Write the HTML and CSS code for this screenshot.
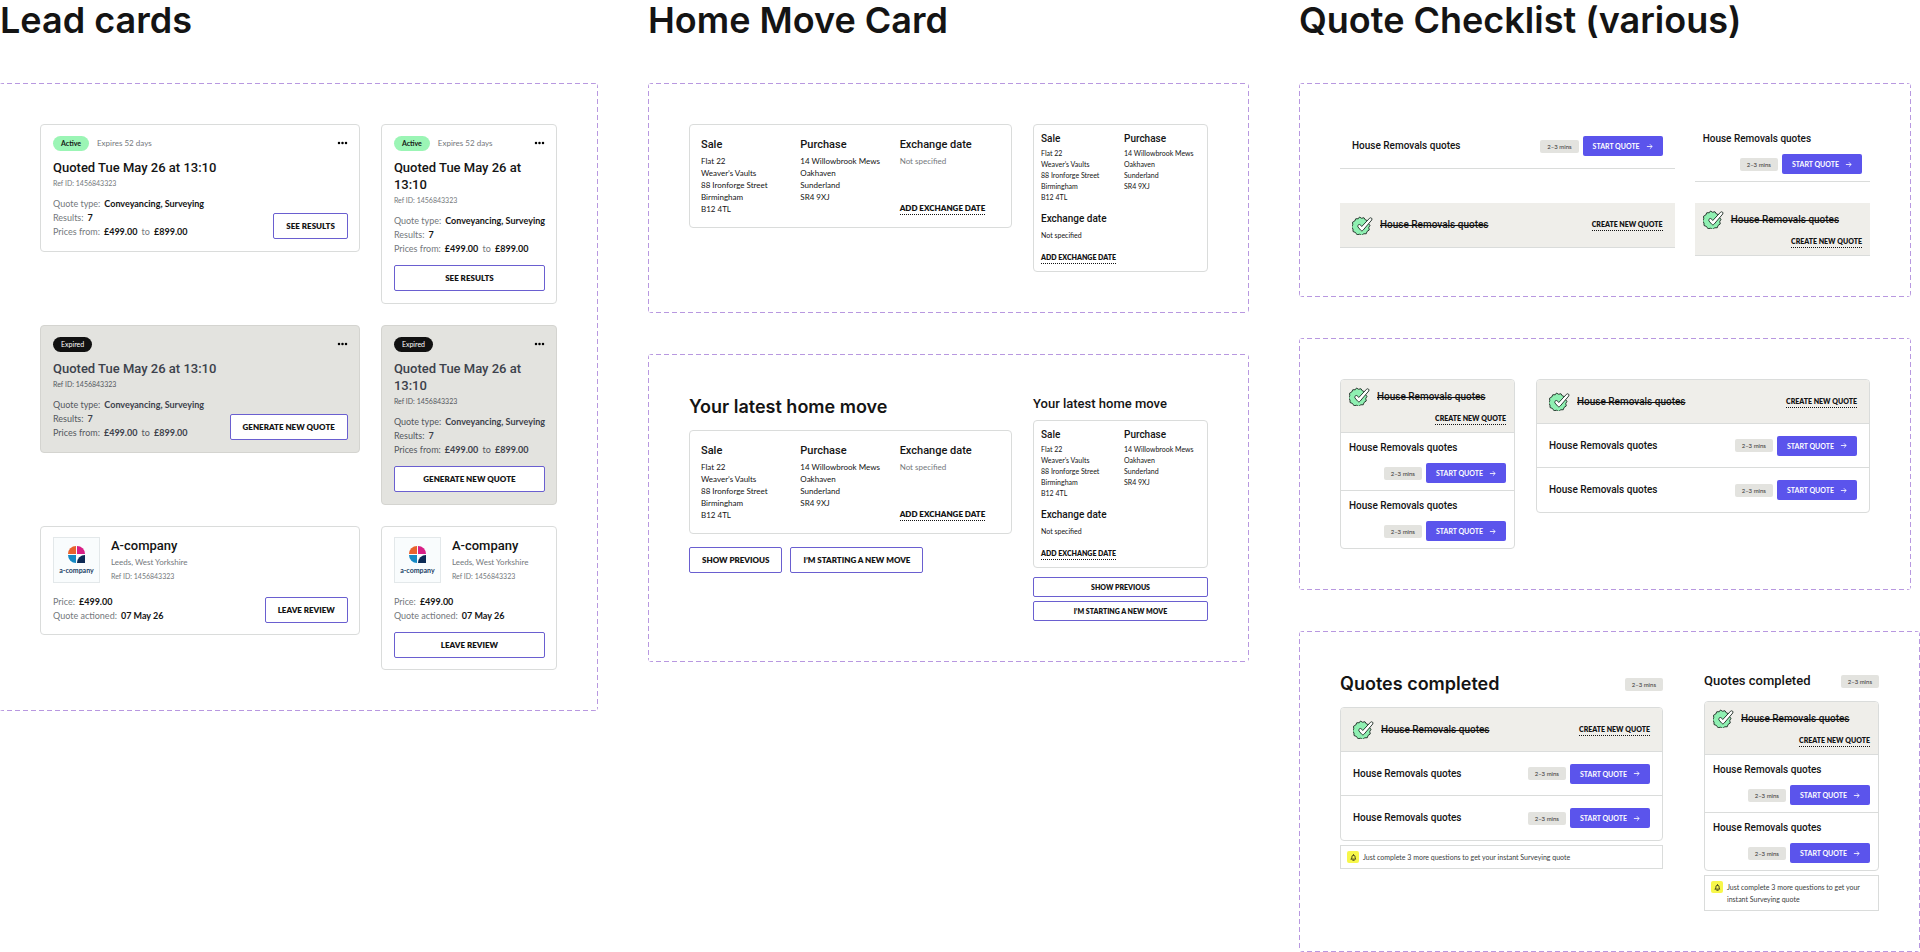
FILE: index.html
```html
<!DOCTYPE html>
<html lang="en">
<head>
<meta charset="utf-8">
<title>Property cards</title>
<link rel="stylesheet" href="styles.css">
</head>
<body>
<svg class="sprite" aria-hidden="true">
  <symbol id="dots" viewBox="0 0 11 4"><circle cx="2" cy="2" r="1.25"/><circle cx="5.5" cy="2" r="1.25"/><circle cx="9" cy="2" r="1.25"/></symbol>
  <symbol id="arrow" viewBox="0 0 12 12"><path d="M1.5 6h9M6.7 2.2L10.5 6 6.7 9.800" fill="none" stroke="currentColor" stroke-width="1.4"/></symbol>
  <symbol id="seal" viewBox="0 0 42 38">
    <path transform="translate(-2 -1)" d="M17 3l4 2.500 5-1 3 4.500 5 1.500v5l4 4-2.500 4.500 1 5-4.500 3-1.500 4.500h-5l-4 3.500-4.500-2.500-5 1-3-4.500-5-2v-5l-3-4 2.500-4.500-.5-5 4.500-2.500 2-4.500h5z" fill="#8ff0b2" stroke="#1b2a22" stroke-width="1.800" stroke-linejoin="round"/>
    <path d="M12 18.500c1.500-2 4-2 5.500 0l2 2.500L35 4.500c2.500-2.500 6.500.5 4.500 3.500L22 28.500c-1.300 1.500-3.200 1.500-4.500 0l-5.500-6.500c-.7-1-.7-2 0-3.500z" fill="#fff" stroke="#1b2a22" stroke-width="1.800" stroke-linejoin="round"/>
  </symbol>
  <symbol id="bell" viewBox="0 0 12 12"><path d="M2 8.800h8L8.800 7V5a2.800 2.800 0 0 0-5.600 0v2zM4.800 10.800h2.400M6 1v1" fill="none" stroke="#2a2a12" stroke-width="1.400" stroke-linecap="round" stroke-linejoin="round"/></symbol>
  <symbol id="logo" viewBox="0 0 20 20">
    <path d="M9.400 0A9.400 9.400 0 0 0 0 9.400h9.400z" fill="#e8622c"/>
    <path d="M10.600 0A9.400 9.400 0 0 1 20 9.400h-9.400z" fill="#d81f86"/>
    <path d="M0 10.600A9.400 9.400 0 0 0 9.400 20v-9.400z" fill="#1489c4"/>
    <path d="M20 10.600V20h-9.400A9.400 9.400 0 0 1 20 10.600z" fill="#0c2a55"/>
  </symbol>
</svg>
<main class="board">
  <section class="column">
    <h1>Lead cards</h1>
    <div class="panel panel-leads">
      <article class="card lead">
        <header class="lead-top"><span class="badge">Active</span><span class="expires">Expires 52 days</span><button class="more" aria-label="More options"><svg><use href="#dots"/></svg></button></header>
        <h3>Quoted Tue May 26 at 13:10</h3>
        <p class="ref">Ref ID: 1456843323</p>
        <div class="lead-body">
          <dl><div><dt>Quote type:</dt><dd>Conveyancing, Surveying</dd></div><div><dt>Results:</dt><dd>7</dd></div><div><dt>Prices from:</dt><dd>£499.00 <span>to</span> £899.00</dd></div></dl>
          <button class="btn">SEE RESULTS</button>
        </div>
      </article>
      <article class="card lead narrow">
        <header class="lead-top"><span class="badge">Active</span><span class="expires">Expires 52 days</span><button class="more" aria-label="More options"><svg><use href="#dots"/></svg></button></header>
        <h3>Quoted Tue May 26 at 13:10</h3>
        <p class="ref">Ref ID: 1456843323</p>
        <div class="lead-body">
          <dl><div><dt>Quote type:</dt><dd>Conveyancing, Surveying</dd></div><div><dt>Results:</dt><dd>7</dd></div><div><dt>Prices from:</dt><dd>£499.00 <span>to</span> £899.00</dd></div></dl>
          <button class="btn">SEE RESULTS</button>
        </div>
      </article>
      <article class="card lead expired">
        <header class="lead-top"><span class="badge">Expired</span><button class="more" aria-label="More options"><svg><use href="#dots"/></svg></button></header>
        <h3>Quoted Tue May 26 at 13:10</h3>
        <p class="ref">Ref ID: 1456843323</p>
        <div class="lead-body">
          <dl><div><dt>Quote type:</dt><dd>Conveyancing, Surveying</dd></div><div><dt>Results:</dt><dd>7</dd></div><div><dt>Prices from:</dt><dd>£499.00 <span>to</span> £899.00</dd></div></dl>
          <button class="btn">GENERATE NEW QUOTE</button>
        </div>
      </article>
      <article class="card lead expired narrow">
        <header class="lead-top"><span class="badge">Expired</span><button class="more" aria-label="More options"><svg><use href="#dots"/></svg></button></header>
        <h3>Quoted Tue May 26 at 13:10</h3>
        <p class="ref">Ref ID: 1456843323</p>
        <div class="lead-body">
          <dl><div><dt>Quote type:</dt><dd>Conveyancing, Surveying</dd></div><div><dt>Results:</dt><dd>7</dd></div><div><dt>Prices from:</dt><dd>£499.00 <span>to</span> £899.00</dd></div></dl>
          <button class="btn">GENERATE NEW QUOTE</button>
        </div>
      </article>
      <article class="card lead company">
        <header class="company-top"><div class="logo"><svg><use href="#logo"/></svg><span>a-company</span></div><div><h3>A-company</h3><p class="place">Leeds, West Yorkshire</p><p class="ref">Ref ID: 1456843323</p></div></header>
        <div class="lead-body">
          <dl><div><dt>Price:</dt><dd>£499.00</dd></div><div><dt>Quote actioned:</dt><dd>07 May 26</dd></div></dl>
          <button class="btn">LEAVE REVIEW</button>
        </div>
      </article>
      <article class="card lead company narrow">
        <header class="company-top"><div class="logo"><svg><use href="#logo"/></svg><span>a-company</span></div><div><h3>A-company</h3><p class="place">Leeds, West Yorkshire</p><p class="ref">Ref ID: 1456843323</p></div></header>
        <div class="lead-body">
          <dl><div><dt>Price:</dt><dd>£499.00</dd></div><div><dt>Quote actioned:</dt><dd>07 May 26</dd></div></dl>
          <button class="btn">LEAVE REVIEW</button>
        </div>
      </article>
    </div>
  </section>

  <section class="column">
    <h1>Home Move Card</h1>
    <div class="panel panel-move">
      <article class="card move">
        <div><h4>Sale</h4><address>Flat 22<br>Weaver’s Vaults<br>88 Ironforge Street<br>Birmingham<br>B12 4TL</address></div>
        <div><h4>Purchase</h4><address>14 Willowbrook Mews<br>Oakhaven<br>Sunderland<br>SR4 9XJ</address></div>
        <div class="exchange"><h4>Exchange date</h4><p>Not specified</p><a class="link" href="#">ADD EXCHANGE DATE</a></div>
      </article>
      <article class="card move narrow">
        <div><h4>Sale</h4><address>Flat 22<br>Weaver’s Vaults<br>88 Ironforge Street<br>Birmingham<br>B12 4TL</address></div>
        <div><h4>Purchase</h4><address>14 Willowbrook Mews<br>Oakhaven<br>Sunderland<br>SR4 9XJ</address></div>
        <div class="exchange"><h4>Exchange date</h4><p>Not specified</p><a class="link" href="#">ADD EXCHANGE DATE</a></div>
      </article>
    </div>
    <div class="panel panel-move">
      <div class="latest">
        <h2>Your latest home move</h2>
        <article class="card move">
          <div><h4>Sale</h4><address>Flat 22<br>Weaver’s Vaults<br>88 Ironforge Street<br>Birmingham<br>B12 4TL</address></div>
          <div><h4>Purchase</h4><address>14 Willowbrook Mews<br>Oakhaven<br>Sunderland<br>SR4 9XJ</address></div>
          <div class="exchange"><h4>Exchange date</h4><p>Not specified</p><a class="link" href="#">ADD EXCHANGE DATE</a></div>
        </article>
        <div class="actions"><button class="btn">SHOW PREVIOUS</button><button class="btn">I’M STARTING A NEW MOVE</button></div>
      </div>
      <div class="latest latest-narrow">
        <h2>Your latest home move</h2>
        <article class="card move narrow">
          <div><h4>Sale</h4><address>Flat 22<br>Weaver’s Vaults<br>88 Ironforge Street<br>Birmingham<br>B12 4TL</address></div>
          <div><h4>Purchase</h4><address>14 Willowbrook Mews<br>Oakhaven<br>Sunderland<br>SR4 9XJ</address></div>
          <div class="exchange"><h4>Exchange date</h4><p>Not specified</p><a class="link" href="#">ADD EXCHANGE DATE</a></div>
        </article>
        <div class="actions"><button class="btn">SHOW PREVIOUS</button><button class="btn">I’M STARTING A NEW MOVE</button></div>
      </div>
    </div>
  </section>

  <section class="column">
    <h1>Quote Checklist (various)</h1>
    <div class="panel panel-rows">
      <div class="loose">
        <div class="row"><h5>House Removals quotes</h5><div class="todo"><span class="mins">2–3 mins</span><button class="start">START QUOTE<svg><use href="#arrow"/></svg></button></div></div>
        <div class="row done"><svg class="seal"><use href="#seal"/></svg><h5><s>House Removals quotes</s></h5><a class="link" href="#">CREATE NEW QUOTE</a></div>
      </div>
      <div class="loose stacked">
        <div class="row"><h5>House Removals quotes</h5><div class="todo"><span class="mins">2–3 mins</span><button class="start">START QUOTE<svg><use href="#arrow"/></svg></button></div></div>
        <div class="row done"><svg class="seal"><use href="#seal"/></svg><h5><s>House Removals quotes</s></h5><a class="link" href="#">CREATE NEW QUOTE</a></div>
      </div>
    </div>
    <div class="panel panel-lists">
      <div class="card list stacked">
        <div class="row done"><svg class="seal"><use href="#seal"/></svg><h5><s>House Removals quotes</s></h5><a class="link" href="#">CREATE NEW QUOTE</a></div>
        <div class="row"><h5>House Removals quotes</h5><div class="todo"><span class="mins">2–3 mins</span><button class="start">START QUOTE<svg><use href="#arrow"/></svg></button></div></div>
        <div class="row"><h5>House Removals quotes</h5><div class="todo"><span class="mins">2–3 mins</span><button class="start">START QUOTE<svg><use href="#arrow"/></svg></button></div></div>
      </div>
      <div class="card list">
        <div class="row done"><svg class="seal"><use href="#seal"/></svg><h5><s>House Removals quotes</s></h5><a class="link" href="#">CREATE NEW QUOTE</a></div>
        <div class="row"><h5>House Removals quotes</h5><div class="todo"><span class="mins">2–3 mins</span><button class="start">START QUOTE<svg><use href="#arrow"/></svg></button></div></div>
        <div class="row"><h5>House Removals quotes</h5><div class="todo"><span class="mins">2–3 mins</span><button class="start">START QUOTE<svg><use href="#arrow"/></svg></button></div></div>
      </div>
    </div>
    <div class="panel panel-completed">
      <div class="completed">
        <header><h2>Quotes completed</h2><span class="mins">2–3 mins</span></header>
        <div class="card list">
          <div class="row done"><svg class="seal"><use href="#seal"/></svg><h5><s>House Removals quotes</s></h5><a class="link" href="#">CREATE NEW QUOTE</a></div>
          <div class="row"><h5>House Removals quotes</h5><div class="todo"><span class="mins">2–3 mins</span><button class="start">START QUOTE<svg><use href="#arrow"/></svg></button></div></div>
          <div class="row"><h5>House Removals quotes</h5><div class="todo"><span class="mins">2–3 mins</span><button class="start">START QUOTE<svg><use href="#arrow"/></svg></button></div></div>
        </div>
        <p class="notice"><span class="bell"><svg><use href="#bell"/></svg></span><span>Just complete 3 more questions to get your instant Surveying quote</span></p>
      </div>
      <div class="completed completed-narrow">
        <header><h2>Quotes completed</h2><span class="mins">2–3 mins</span></header>
        <div class="card list stacked">
          <div class="row done"><svg class="seal"><use href="#seal"/></svg><h5><s>House Removals quotes</s></h5><a class="link" href="#">CREATE NEW QUOTE</a></div>
          <div class="row"><h5>House Removals quotes</h5><div class="todo"><span class="mins">2–3 mins</span><button class="start">START QUOTE<svg><use href="#arrow"/></svg></button></div></div>
          <div class="row"><h5>House Removals quotes</h5><div class="todo"><span class="mins">2–3 mins</span><button class="start">START QUOTE<svg><use href="#arrow"/></svg></button></div></div>
        </div>
        <p class="notice"><span class="bell"><svg><use href="#bell"/></svg></span><span>Just complete 3 more questions to get your instant Surveying quote</span></p>
      </div>
    </div>
  </section>
</main>
</body>
</html>
```

FILE: styles.css
```css
:root {
  --ink: #141414;
  --grey: #74787c;
  --line: #dadcdb;
  --violet: #6a5fd0;
  --primary: #5b54ec;
  --stone: #e3e3df;
  --sand: #efeeea;
  --display: Inter, "Liberation Sans", sans-serif;
  --title: Roboto, "Liberation Sans", sans-serif;
  --body: Lato, "Liberation Sans", sans-serif;
}
* { box-sizing: border-box; }
body { margin: 0; background: #fff; color: var(--ink); font: 9px/14px var(--body); }
h1, h2, h3, h4, h5, p, dl, dd { margin: 0; }
button { font: inherit; color: inherit; cursor: pointer; }
.sprite { position: absolute; width: 0; height: 0; }

.board { display: grid; grid-template-columns: 598fr 601fr 621fr; gap: 50px; }
h1 { font: 600 36px/40px var(--display); margin-bottom: 43px; white-space: nowrap; }
h2 { font: 600 18px/24px var(--display); white-space: nowrap; }
h3 { font: 500 13px/17px var(--title); }
h4 { font: 500 11px/16px var(--title); }
h5 { font: 500 10px/16px var(--title); white-space: nowrap; }

/* Dashed frame around each group of components */
.panel {
  --dash: #b898e0;
  display: grid;
  align-items: start;
  padding: 41px;
  border-radius: 4px;
  background:
    repeating-linear-gradient(90deg, var(--dash) 0 5px, transparent 5px 8px) top / 100% 1px no-repeat,
    repeating-linear-gradient(90deg, var(--dash) 0 5px, transparent 5px 8px) bottom / 100% 1px no-repeat,
    repeating-linear-gradient(var(--dash) 0 5px, transparent 5px 8px) left / 1px 100% no-repeat,
    repeating-linear-gradient(var(--dash) 0 5px, transparent 5px 8px) right / 1px 100% no-repeat;
}
.panel + .panel { margin-top: 41px; }
.panel-leads { grid-template-columns: 321fr 175fr; gap: 21px; margin-left: -1px; }
.panel-move { grid-template-columns: 323fr 175fr; gap: 21px; }
.panel-rows { grid-template-columns: 334fr 175fr; gap: 20px; margin-right: 9px; }
.panel-lists { grid-template-columns: 175fr 334fr; gap: 21px; margin-right: 9px; }
.panel-completed { grid-template-columns: 323fr 175fr; gap: 41px; }

.card { border: 1px solid var(--line); border-radius: 4px; background: #fff; }

.lead { padding: 10px 11px 12px 12px; }
.lead-top { display: flex; align-items: center; gap: 8px; height: 16px; }
.badge { padding: 0 8px; border-radius: 8px; background: #9bf5b5; font-size: 7px; font-weight: 700; line-height: 15px; }
.expires, .place { color: var(--grey); font-size: 8px; }
.more { display: flex; margin-left: auto; padding: 0; border: 0; background: none; }
.more svg { width: 11px; height: 4px; }
.lead h3 { margin-top: 8px; }
.ref { color: var(--grey); font-size: 7px; line-height: 14px; }
.lead-body { display: flex; align-items: flex-end; justify-content: space-between; margin-top: 7px; }
.lead dl > div { display: flex; gap: 4px; white-space: nowrap; }
.lead dt, .lead dd span { color: var(--grey); font-weight: 400; }
.lead dd { font-weight: 700; }
.lead dd span { margin: 0 2px; }
.btn { padding: 0 12px; border: 1px solid var(--violet); border-radius: 2px; background: #fff; font-size: 8px; font-weight: 800; line-height: 24px; white-space: nowrap; }
.lead.narrow .lead-body { flex-direction: column; align-items: stretch; gap: 9px; }
.lead.expired { background: var(--stone); border-color: #d4d4d0; }
.expired .badge { background: #111; color: #fff; font-weight: 400; }
.expired h3, .expired dd { color: #3c414b; }
.expired .ref, .expired dt, .expired dd span { color: #54585e; }
.lead.company { padding-bottom: 11px; }
.company-top { display: flex; gap: 11px; }
.lead.company h3 { margin-top: 0; line-height: 18px; }
.logo { display: flex; flex-direction: column; align-items: center; justify-content: center; gap: 3px; width: 47px; height: 46px; border: 1px solid #e3e8ea; background: #f9fcfd; }
.logo svg { width: 17px; height: 17px; }
.logo span { color: #1b3f66; font: 700 7px/8px var(--body); }
.company .lead-body { margin-top: 12px; }

.move { display: grid; grid-template-columns: repeat(3, 1fr); padding: 12px 12px 12px 11px; }
address { margin-top: 2px; font-style: normal; font-size: 8px; line-height: 12px; }
.exchange { display: flex; flex-direction: column; align-items: flex-start; }
.exchange p { margin-top: 2px; color: var(--grey); font-size: 8px; line-height: 12px; }
.link { color: inherit; border-bottom: 1px dotted currentColor; font-weight: 800; font-size: 8px; line-height: 12px; text-decoration: none; white-space: nowrap; }
.exchange .link { margin-top: auto; }
.move.narrow { grid-template-columns: 1fr 1fr; padding: 7px 0 7px 7px; }
.narrow h4 { font-size: 10px; line-height: 14px; }
.narrow address, .narrow .exchange p { font-size: 7px; line-height: 11px; }
.move.narrow .exchange { grid-column: 1 / -1; margin-top: 9px; }
.move.narrow .exchange p { margin-top: 4px; color: inherit; }
.move.narrow .link { margin-top: 11px; font-size: 7px; line-height: 11px; }
.latest h2 { margin-bottom: 11px; }
.latest-narrow h2 { font: 500 13px/18px var(--title); margin-bottom: 7px; }
.completed-narrow h2 { font: 500 13px/18px var(--title); }
.actions { display: flex; gap: 8px; margin-top: 13px; }
.latest-narrow .actions { flex-direction: column; gap: 4px; margin-top: 9px; }
.latest-narrow .btn { font-size: 7px; line-height: 18px; }

.row { display: flex; align-items: center; padding: 11px 12px; min-height: 45px; border-bottom: 1px solid var(--line); }
.list .row { min-height: 44px; }
.list .row:last-child { border-bottom: 0; }
.list { overflow: hidden; }
.todo { display: flex; align-items: center; gap: 4px; margin-left: auto; }
.mins { padding: 0 7px; border-radius: 2px; background: var(--stone); color: #333; font-size: 6px; line-height: 13px; white-space: nowrap; }
.start { display: flex; align-items: center; gap: 6px; padding: 0 10px; border: 0; border-radius: 2px; background: var(--primary); color: #fff; font-size: 7px; font-weight: 700; line-height: 20px; white-space: nowrap; }
.start svg { width: 7px; height: 7px; }
.done { background: var(--sand); gap: 7px; }
.done .link { margin-left: auto; font-size: 7px; line-height: 11px; }
.seal { flex: none; width: 21px; height: 19px; }
.loose { display: grid; gap: 34px; }
.loose.stacked { gap: 21px; }
.stacked .row { flex-wrap: wrap; padding: 7px 8px; row-gap: 7px; }
.stacked .todo { width: 100%; justify-content: flex-end; }

.completed header { display: flex; align-items: center; justify-content: space-between; margin-bottom: 11px; }
.notice { display: flex; gap: 4px; margin-top: 4px; padding: 5px 6px; border: 1px solid var(--line); color: #3a3d40; font-size: 7px; line-height: 12px; }
.bell { display: flex; align-items: center; justify-content: center; flex: none; width: 12px; height: 12px; border-radius: 2px; background: #f7f74a; }
.bell svg { width: 7px; height: 7px; }
```
